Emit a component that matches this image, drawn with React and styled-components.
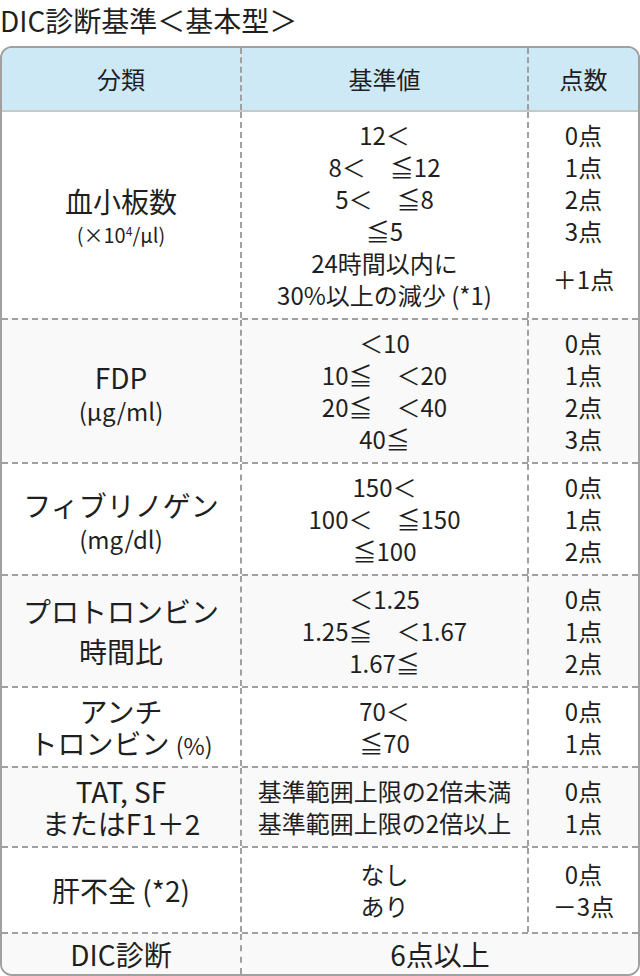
import React from 'react';
import styled, { createGlobalStyle } from 'styled-components';

const Global = createGlobalStyle`
  html, body { margin: 0; padding: 0; background: #fff; }
  body {
    font-family: "Noto Sans CJK JP", "Noto Sans", sans-serif;
    color: #1f1f1f;
  }
`;

const Page = styled.div`
  width: 640px;
`;

const Title = styled.h1`
  margin: 0 0 6px;
  font-size: 28px;
  font-weight: 400;
  line-height: 40px;
`;

const Table = styled.div`
  border: 2px solid #a0a0a0;
  border-radius: 12px;
  overflow: hidden;
`;

const HeadRow = styled.div`
  display: grid;
  grid-template-columns: 238px 287px 1fr;
  background: #cde9f6;
  border-bottom: 2px solid #c8c8c8;
`;

const Row = styled.div`
  display: grid;
  grid-template-columns: 238px 287px 1fr;
  background: ${p => (p.$alt ? '#f9f9f9' : '#fff')};
  & + & { border-top: 2px dashed #a0a0a0; }
`;

const Cell = styled.div`
  display: flex;
  flex-direction: column;
  align-items: center;
  justify-content: center;
  text-align: center;
  padding: ${p => (p.$padY ?? 7)}px 4px;
  font-size: 24px;
  line-height: 32px;
  grid-column: span ${p => p.$span || 1};
  & + & { border-left: 2px dashed #a0a0a0; }
`;

const HeadCell = styled(Cell)`
  padding: 15px 4px;
`;

const Line = styled.div`
  white-space: pre;
  line-height: ${p => p.$lh || 32}px;
`;

const Main = styled.div`
  font-size: 28px;
  line-height: ${p => p.$lh || 40}px;
  white-space: pre;
`;

const Sub = styled.div`
  font-size: ${p => p.$size || 24}px;
  line-height: 28px;
`;

const SubInline = styled.span`
  font-size: 23px;
  line-height: 1;
`;

const Sup = styled.sup`
  font-size: 12px;
  line-height: 0;
  vertical-align: 7px;
`;

const rows = [
  {
    label: (
      <>
        <Main>血小板数</Main>
        <Sub $size={20}>(×10<Sup>4</Sup>/μl)</Sub>
      </>
    ),
    values: ['12＜', '8＜　≦12', '5＜　≦8', '≦5', '24時間以内に', '30%以上の減少 (*1)'],
    points: [['0点'], ['1点'], ['2点'], ['3点'], ['＋1点', 64]],
  },
  {
    label: (
      <>
        <Main>FDP</Main>
        <Sub>(μg/ml)</Sub>
      </>
    ),
    values: ['＜10', '10≦　＜20', '20≦　＜40', '40≦'],
    points: [['0点'], ['1点'], ['2点'], ['3点']],
  },
  {
    label: (
      <>
        <Main>フィブリノゲン</Main>
        <Sub>(mg/dl)</Sub>
      </>
    ),
    values: ['150＜', '100＜　≦150', '≦100'],
    points: [['0点'], ['1点'], ['2点']],
  },
  {
    label: (
      <>
        <Main>プロトロンビン</Main>
        <Main>時間比</Main>
      </>
    ),
    values: ['＜1.25', '1.25≦　＜1.67', '1.67≦'],
    points: [['0点'], ['1点'], ['2点']],
  },
  {
    label: (
      <>
        <Main $lh={32}>アンチ</Main>
        <Main $lh={32}>
          トロンビン <SubInline>(%)</SubInline>
        </Main>
      </>
    ),
    values: ['70＜', '≦70'],
    points: [['0点'], ['1点']],
  },
  {
    label: (
      <>
        <Main $lh={32}>TAT, SF</Main>
        <Main $lh={32}>またはF1＋2</Main>
      </>
    ),
    values: ['基準範囲上限の2倍未満', '基準範囲上限の2倍以上'],
    points: [['0点'], ['1点']],
  },
  {
    label: (
      <>
        <Main>肝不全 (*2)</Main>
      </>
    ),
    values: ['なし', 'あり'],
    points: [['0点'], ['－3点']],
    padY: 10,
  },
];

export default function App() {
  return (
    <Page>
      <Global />
      <Title>DIC診断基準＜基本型＞</Title>
      <Table>
        <HeadRow>
          <HeadCell>分類</HeadCell>
          <HeadCell>基準値</HeadCell>
          <HeadCell>点数</HeadCell>
        </HeadRow>
        {rows.map((r, i) => (
          <Row key={i} $alt={i % 2 === 1}>
            <Cell $padY={r.padY}>{r.label}</Cell>
            <Cell $padY={r.padY}>
              {r.values.map((v, j) => (
                <Line key={j}>{v}</Line>
              ))}
            </Cell>
            <Cell $padY={r.padY}>
              {r.points.map(([p, lh], j) => (
                <Line key={j} $lh={lh}>
                  {p}
                </Line>
              ))}
            </Cell>
          </Row>
        ))}
        <Row $alt>
          <Cell $padY={0}>
            <Main>DIC診断</Main>
          </Cell>
          <Cell $padY={0} $span={2}>
            <Main>6点以上</Main>
          </Cell>
        </Row>
      </Table>
    </Page>
  );
}
